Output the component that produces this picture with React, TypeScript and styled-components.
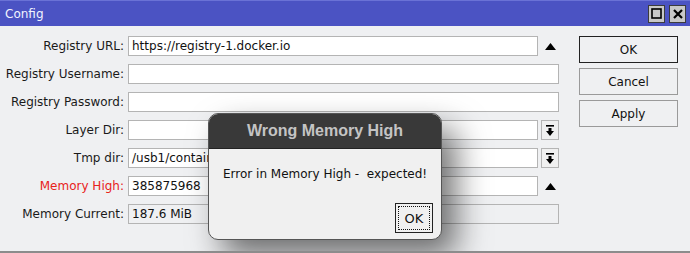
import { Fragment } from 'react';
import styled, { createGlobalStyle } from 'styled-components';

const GlobalStyles = createGlobalStyle`
  html, body {
    margin: 0;
    padding: 0;
    background: #eff0f2;
  }
  * {
    box-sizing: border-box;
  }
`;

const Window = styled.div`
  position: relative;
  width: 690px;
  height: 253px;
  display: flex;
  flex-direction: column;
  background: #eff0f2;
  border-bottom: 2px solid #8c8c8c;
  font-family: 'DejaVu Sans', Verdana, sans-serif;
  overflow: hidden;
`;

const TitleBar = styled.div`
  height: 26px;
  flex: none;
  display: flex;
  align-items: center;
  justify-content: space-between;
  padding: 0 4px 0 5px;
  background: #4b53c3;
  border-top: 1px solid #6a72d6;
  color: #f2f3ff;
  font-size: 12px;
`;

const TitleButtons = styled.div`
  display: flex;
  gap: 4px;
`;

const TitleButton = styled.div`
  width: 17px;
  height: 18px;
  display: flex;
  align-items: center;
  justify-content: center;
  background: #c8c8c8;
  border: 1px solid #3c3c3c;
`;

const Body = styled.div`
  flex: 1;
  display: flex;
  padding: 10px 0 0 0;
  gap: 20px;
`;

const Form = styled.div`
  display: grid;
  grid-template-columns: 124px 431px;
  column-gap: 4px;
  row-gap: 8px;
  align-content: start;
`;

const Label = styled.label<{ $error?: boolean }>`
  height: 20px;
  line-height: 20px;
  text-align: right;
  white-space: nowrap;
  font-size: 12px;
  color: ${(p) => (p.$error ? '#e8221b' : '#1a1a1a')};
`;

const Field = styled.div`
  display: flex;
  gap: 3px;
  height: 20px;
`;

const Input = styled.div<{ $readOnly?: boolean }>`
  flex: 1;
  height: 20px;
  line-height: 18px;
  padding: 0 3px;
  font-size: 12px;
  color: #111;
  white-space: nowrap;
  overflow: hidden;
  background: ${(p) => (p.$readOnly ? '#eff0f2' : '#ffffff')};
  border: 1px solid #b4b4b4;
`;

const Trailing = styled.div<{ $boxed?: boolean }>`
  width: 18px;
  flex: none;
  display: flex;
  align-items: center;
  justify-content: center;
  border: ${(p) => (p.$boxed ? '1px solid #b4b4b4' : 'none')};
  background: ${(p) => (p.$boxed ? '#f0f0f0' : 'transparent')};
`;

const Buttons = styled.div`
  display: flex;
  flex-direction: column;
  gap: 5px;
`;

const Button = styled.div<{ $default?: boolean }>`
  width: 99px;
  height: 27px;
  display: flex;
  align-items: center;
  justify-content: center;
  font-size: 12px;
  color: #111;
  background: #eff0f2;
  border: 1px solid ${(p) => (p.$default ? '#222' : '#9a9a9a')};
`;

const Dialog = styled.div`
  position: absolute;
  left: 208px;
  top: 113px;
  width: 234px;
  height: 127px;
  display: flex;
  flex-direction: column;
  border-radius: 10px;
  overflow: hidden;
  background: #f0f0f0;
  border: 1px solid #555;
  box-shadow: 14px 16px 32px rgba(0, 0, 0, 0.55);
`;

const DialogTitle = styled.div`
  height: 35px;
  flex: none;
  display: flex;
  align-items: center;
  justify-content: center;
  background: #393939;
  border-bottom: 1px solid #222;
  color: #c4c4c4;
  font-family: 'Liberation Sans', Arial, sans-serif;
  font-weight: bold;
  font-size: 16px;
`;

const DialogBody = styled.div`
  flex: 1;
  display: flex;
  flex-direction: column;
  padding: 18px 8px 6px 14px;
`;

const Message = styled.div`
  font-size: 12px;
  color: #111;
  white-space: pre;
`;

const DialogActions = styled.div`
  margin-top: auto;
  display: flex;
  justify-content: flex-end;
`;

const DialogOk = styled.div`
  width: 38px;
  height: 30px;
  padding: 2px;
  border: 1px solid #222;
  background: #f0f0f0;
`;

const FocusRing = styled.div`
  height: 100%;
  display: flex;
  align-items: center;
  justify-content: center;
  border: 1px dotted #111;
  font-size: 13px;
  color: #111;
`;

const UpArrow = () => (
  <svg width="11" height="7" viewBox="0 0 11 7">
    <path d="M0 7 L5.5 0 L11 7 Z" fill="#000" />
  </svg>
);

const DownToBar = () => (
  <svg width="10" height="11" viewBox="0 0 10 11">
    <rect x="1" y="0" width="8" height="1.6" fill="#000" />
    <path d="M3.5 3 H6.5 V6 H9 L5 11 L1 6 H3.5 Z" fill="#000" />
  </svg>
);

type Row = {
  label: string;
  value?: string;
  trailing?: 'up' | 'down';
  error?: boolean;
  readOnly?: boolean;
};

const rows: Row[] = [
  { label: 'Registry URL:', value: 'https://registry-1.docker.io', trailing: 'up' },
  { label: 'Registry Username:' },
  { label: 'Registry Password:' },
  { label: 'Layer Dir:', trailing: 'down' },
  { label: 'Tmp dir:', value: '/usb1/containers/tmp', trailing: 'down' },
  { label: 'Memory High:', value: '385875968', trailing: 'up', error: true },
  { label: 'Memory Current:', value: '187.6 MiB', readOnly: true },
];

export default function App() {
  return (
    <>
      <GlobalStyles />
      <Window>
        <TitleBar>
          <span>Config</span>
          <TitleButtons>
            <TitleButton>
              <svg width="11" height="11" viewBox="0 0 11 11">
                <rect x="1" y="1" width="9" height="9" fill="none" stroke="#000" strokeWidth="1.6" />
              </svg>
            </TitleButton>
            <TitleButton>
              <svg width="10" height="10" viewBox="0 0 10 10">
                <path d="M1 1 L9 9 M9 1 L1 9" stroke="#000" strokeWidth="2.2" />
              </svg>
            </TitleButton>
          </TitleButtons>
        </TitleBar>
        <Body>
          <Form>
            {rows.map((r) => (
              <Fragment key={r.label}>
                <Label $error={r.error}>{r.label}</Label>
                <Field>
                  <Input $readOnly={r.readOnly}>{r.value}</Input>
                  {r.trailing === 'up' && (
                    <Trailing>
                      <UpArrow />
                    </Trailing>
                  )}
                  {r.trailing === 'down' && (
                    <Trailing $boxed>
                      <DownToBar />
                    </Trailing>
                  )}
                </Field>
              </Fragment>
            ))}
          </Form>
          <Buttons>
            <Button $default>OK</Button>
            <Button>Cancel</Button>
            <Button>Apply</Button>
          </Buttons>
        </Body>
        <Dialog>
          <DialogTitle>Wrong Memory High</DialogTitle>
          <DialogBody>
            <Message>{'Error in Memory High -  expected!'}</Message>
            <DialogActions>
              <DialogOk>
                <FocusRing>OK</FocusRing>
              </DialogOk>
            </DialogActions>
          </DialogBody>
        </Dialog>
      </Window>
    </>
  );
}
